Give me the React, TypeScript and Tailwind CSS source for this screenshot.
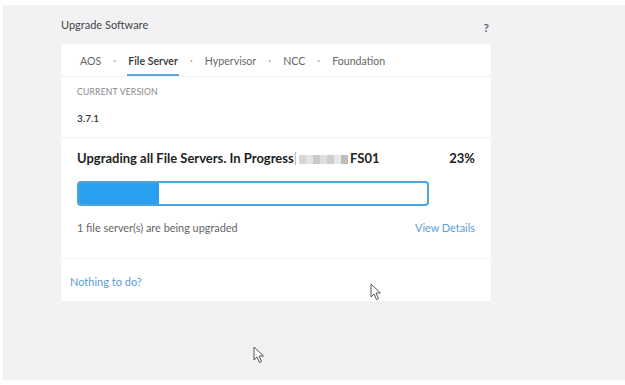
import React from "react";

const tabs = ["AOS", "File Server", "Hypervisor", "NCC", "Foundation"];

function Cursor({ className }: { className: string }) {
    return (
        <svg className={className} width="12" height="18" viewBox="0 0 12 18">
            <path d="M1 1 L1 14 L4 11 L6.5 16.5 L8.5 15.5 L6 10 L10.5 10 Z" fill="#fff" stroke="#555" strokeWidth="1" strokeLinejoin="round" />
        </svg>
    );
}

function Blurred() {
    const blocks = ["#d6d6d6", "#e4e4e4", "#c9c9c9", "#dedede", "#cfcfcf", "#e8e8e8", "#bdbdbd"];
    return (
        <span className="inline-flex items-center mx-[2px] h-[10px] align-middle">
            {blocks.map((c, i) => (
                <span key={i} className="inline-block w-[7px] h-[9px]" style={{ background: c }} />
            ))}
        </span>
    );
}

export default function App() {
    return (
        <div className="relative w-[625px] h-[385px] bg-white font-['Lato','Open_Sans',sans-serif] overflow-hidden">
            <div className="ml-[3px] mt-[5px] w-[622px] h-[375px] bg-[#f2f2f5] pl-[58px] pt-[13px]">
                <div className="flex items-center justify-between w-[430px] h-[14px] mb-[12px] pr-[2px]">
                    <span className="text-[11px] leading-[14px] text-[#444]">Upgrade Software</span>
                    <span className="text-[12px] font-bold text-[#666] mt-[5px]">?</span>
                </div>

                <div className="w-[430px] bg-white">
                    <div className="flex items-stretch gap-3 h-[33px] pt-[3px] pl-[19px] border-b border-[#f0f0f2] text-[10.6px] text-[#666]">
                        {tabs.map((t, i) => (
                            <React.Fragment key={t}>
                                {i > 0 && <span className="flex items-center text-[#999] w-[3px] justify-center">·</span>}
                                <span
                                    className={
                                        t === "File Server"
                                            ? "flex items-center px-[1px] -mx-[1px] text-[#333] font-semibold border-b-2 border-[#5aaae2] pt-[2px]"
                                            : "flex items-center"
                                    }
                                >
                                    {t}
                                </span>
                            </React.Fragment>
                        ))}
                    </div>

                    <div className="h-[61px] px-4 pt-[10px] border-b border-[#f2f2f4]">
                        <div className="text-[8.6px] leading-[10px] uppercase tracking-[0.2px] text-[#888]">Current Version</div>
                        <div className="mt-[15px] text-[10px] leading-[12px] font-semibold text-[#333]">3.7.1</div>
                    </div>

                    <div className="h-[121px] px-4 pt-[13px] border-b border-[#f2f2f4]">
                        <div className="flex items-center justify-between h-[16px] text-[13px] font-bold text-[#222]">
                            <span className="flex items-center">
                                Upgrading all File Servers. In Progress
                                <span className="font-normal text-[#aaa]">|</span>
                                <Blurred />
                                FS01
                            </span>
                            <span>23%</span>
                        </div>
                        <div className="mt-[14px] w-[352px] h-[25px] rounded-[4px] border-2 border-[#4da3dd] overflow-hidden bg-white">
                            <div className="h-full bg-[#2a9ff0]" style={{ width: "23%" }} />
                        </div>
                        <div className="mt-[15px] flex items-center justify-between h-[14px] text-[10.9px]">
                            <span className="text-[#666]">1 file server(s) are being upgraded</span>
                            <span className="text-[#5b9fd8]">View Details</span>
                        </div>
                    </div>

                    <div className="h-[42px] pl-[9px] pt-[16px]">
                        <div className="text-[11px] leading-[14px] text-[#5b9bd5]">Nothing to do?</div>
                    </div>
                </div>
            </div>

            <Cursor className="absolute left-[370px] top-[283px]" />
            <Cursor className="absolute left-[253px] top-[346px]" />
        </div>
    );
}
